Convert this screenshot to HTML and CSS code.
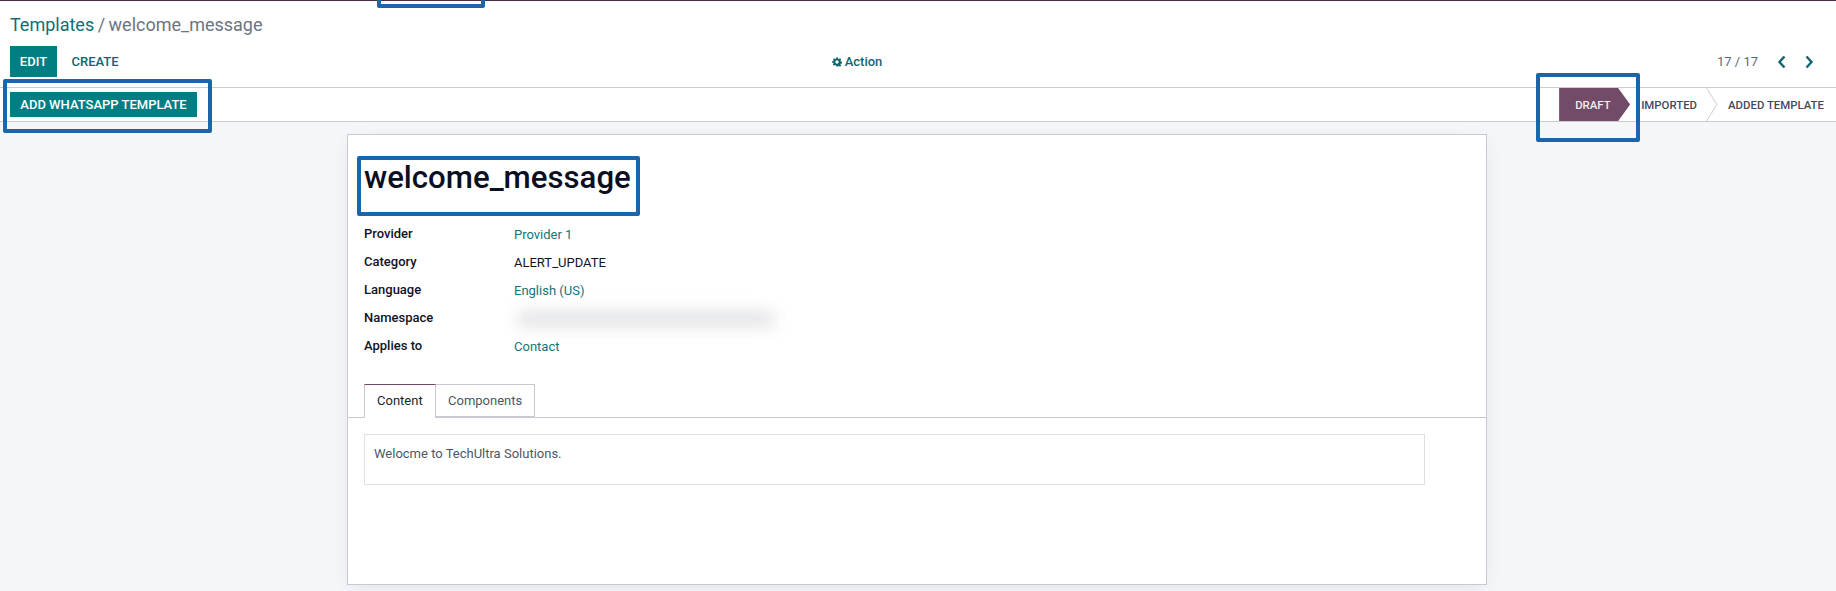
FILE: index.html
```html
<!DOCTYPE html>
<html lang="en">
<head>
    <meta charset="UTF-8">
    <title>Templates / welcome_message</title>
    <link rel="stylesheet" href="styles.css">
</head>
<body>

<div class="top-line"></div>

<!-- Control panel -->
<div class="control-panel">
    <div class="breadcrumb"><a>Templates</a> <span class="sep">/</span> <span class="current">welcome_message</span></div>
    <div class="toolbar">
        <div class="toolbar-left">
            <button class="btn-primary btn-edit">EDIT</button>
            <button class="btn-link">CREATE</button>
        </div>
        <div class="toolbar-mid">
            <svg class="gear" viewBox="0 0 24 24"><path d="M10 1h4l.6 3.2 2 .8L19.300 3.200l2.800 2.800-1.800 2.700.8 2 3.200.6v4l-3.200.6-.8 2 1.800 2.700-2.800 2.800-2.700-1.800-2 .8L14 23h-4l-.6-3.200-2-.8-2.700 1.800-2.800-2.800 1.800-2.700-.8-2L0 14v-4l3.200-.6.8-2L2.200 6 5 3.200l2.400 1.800 2-.8zM12 8a4 4 0 1 0 0 8 4 4 0 0 0 0-8z" fill-rule="evenodd"/></svg>
            <span>Action</span>
        </div>
        <div class="pager">
            <span class="pager-count">17 / 17</span>
            <svg class="chev" viewBox="0 0 10 14"><path d="M7.500 1.500 2.500 7l5 5.500"/></svg>
            <svg class="chev" viewBox="0 0 10 14"><path d="M2.500 1.500 7.500 7l-5 5.500"/></svg>
        </div>
    </div>
</div>

<!-- Status bar -->
<div class="statusbar">
    <button class="btn-primary btn-add">ADD WHATSAPP TEMPLATE</button>
    <div class="stages">
        <div class="stage stage-active">DRAFT</div>
        <div class="stage stage-imported">IMPORTED</div>
        <svg class="stage-sep" viewBox="0 0 12 34"><path d="M.5 0 11 17 .5 34"/></svg>
        <div class="stage stage-added">ADDED TEMPLATE</div>
    </div>
</div>

<!-- Form sheet -->
<div class="sheet">
    <h1 class="title">welcome_message</h1>
    <div class="fields">
        <div class="field"><label>Provider</label><a>Provider 1</a></div>
        <div class="field"><label>Category</label><span>ALERT_UPDATE</span></div>
        <div class="field"><label>Language</label><a>English (US)</a></div>
        <div class="field"><label>Namespace</label><span class="blurred"></span></div>
        <div class="field"><label>Applies to</label><a>Contact</a></div>
    </div>
    <div class="tabs">
        <div class="tab tab-active">Content</div>
        <div class="tab">Components</div>
    </div>
    <div class="tab-pane">
        <div class="content-box">Welocme to TechUltra Solutions.</div>
    </div>
</div>

<!-- Highlight boxes drawn on top of the screenshot -->
<div class="mark mark-top"></div>
<div class="mark mark-add"></div>
<div class="mark mark-draft"></div>
<div class="mark mark-title"></div>

</body>
</html>
```

FILE: styles.css
```css
* {
    box-sizing: border-box;
}
html, body {
    height: 591px;
    overflow: hidden;
}
body {
    margin: 0;
    position: relative;
    font-family: Roboto, "Liberation Sans", sans-serif;
    font-size: 13px;
    color: #4c4c4c;
    background-color: #f5f6fa;
}
a {
    color: #12747c;
}
.top-line {
    height: 1px;
    background-color: #4b2f47;
}
.control-panel {
    background-color: #fff;
    padding: 12px 10px 0;
    height: 86px;
}
.breadcrumb {
    font-size: 18px;
    line-height: 24px;
    word-spacing: -1px;
    color: #6c7480;
}
.breadcrumb a {
    color: #0f6f75;
}
.toolbar {
    display: grid;
    grid-template-columns: 605px 484px 1fr;
    align-items: center;
    margin-top: 9px;
    height: 31px;
}
.toolbar-left {
    display: flex;
    align-items: center;
}
button {
    border: none;
    font-family: inherit;
    font-size: 13px;
    font-weight: 500;
    padding: 0;
}
.btn-primary {
    background-color: #017e84;
    color: #fff;
}
.btn-edit {
    width: 47px;
    height: 31px;
}
.btn-link {
    background: none;
    color: #0f6673;
    margin-left: 14.500px;
}
.toolbar-mid {
    display: flex;
    align-items: center;
    justify-content: center;
    gap: 3px;
    color: #0f6673;
    font-weight: 500;
}
.gear {
    width: 10px;
    height: 10px;
    fill: #0f6673;
}
.pager {
    display: flex;
    align-items: center;
    justify-content: flex-end;
    color: #5c6a78;
    padding-right: 12px;
}
.pager-count {
    margin-right: 2px;
}
.chev {
    width: 10px;
    height: 14px;
    margin-left: 17px;
    fill: none;
    stroke: #0f6673;
    stroke-width: 2.400;
}
.statusbar {
    display: flex;
    align-items: center;
    justify-content: space-between;
    height: 35px;
    padding-left: 10px;
    background-color: #fff;
    border-top: 1px solid #ccc;
    border-bottom: 1px solid #ccc;
}
.btn-add {
    width: 187px;
    height: 25px;
    font-size: 13px;
}
.stages {
    display: flex;
    align-items: center;
    height: 33px;
    padding-right: 12px;
    font-size: 11.400px;
    font-weight: 500;
    color: #3f4b5c;
}
.stage {
    display: flex;
    align-items: center;
    height: 100%;
}
.stage-active {
    width: 71px;
    padding-left: 16px;
    color: #f3edf2;
    background-color: #714b67;
    clip-path: polygon(0 0, 59px 0, 100% 50%, 59px 100%, 0 100%);
}
.stage-imported {
    margin-left: 11px;
}
.stage-sep {
    width: 12px;
    height: 33px;
    margin-left: 9px;
    fill: none;
    stroke: #ccc;
}
.stage-added {
    margin-left: 10px;
}
.sheet {
    width: 1140px;
    height: 451px;
    margin: 12px auto 0;
    transform: translateX(-1px);
    background-color: #fff;
    border: 1px solid #c9c9d1;
    box-shadow: 0 5px 20px -5px rgba(0, 0, 0, 0.1);
    padding: 0 16px;
}
.title {
    margin: 22px 0 0;
    font-size: 31.200px;
    line-height: 42px;
    font-weight: 500;
    color: #0c0f22;
}
.fields {
    margin-top: 22px;
}
.field {
    display: flex;
    height: 28px;
    line-height: 28px;
    color: #10131f;
}
.field label {
    width: 150px;
    font-weight: 500;
    margin-top: -1px;
}
.blurred {
    display: block;
    width: 256px;
    height: 16px;
    margin: 6px 0 0 4px;
    background-color: #e2e3e5;
    filter: blur(8px);
}
.tabs {
    display: flex;
    margin: 23px -16px 0;
    padding-left: 16px;
    height: 34px;
    border-bottom: 1px solid #c9c9d1;
}
.tab {
    padding: 0 12px;
    line-height: 32px;
    height: 33px;
    border: 1px solid #c9c9d1;
    border-left: none;
    color: #4c5766;
}
.tab-active {
    width: 72px;
    height: 34px;
    background-color: #fff;
    color: #1b1f2b;
    border-left: 1px solid #c9c9d1;
    border-top: 1px solid #714b67;
    border-bottom: none;
}
.tab-pane {
    padding-top: 16px;
}
.content-box {
    width: 1061px;
    height: 51px;
    padding: 11px 9px;
    border: 1px solid #dee0e4;
    color: #4c5766;
}
.mark {
    position: absolute;
    border: 4px solid #1a65ab;
    border-radius: 2px;
}
.mark-top {
    left: 377px;
    top: -4px;
    width: 108px;
    height: 12px;
}
.mark-add {
    left: 3px;
    top: 79px;
    width: 209px;
    height: 54px;
}
.mark-draft {
    left: 1536px;
    top: 73px;
    width: 104px;
    height: 69px;
}
.mark-title {
    left: 357px;
    top: 156px;
    width: 283px;
    height: 60px;
}
```
